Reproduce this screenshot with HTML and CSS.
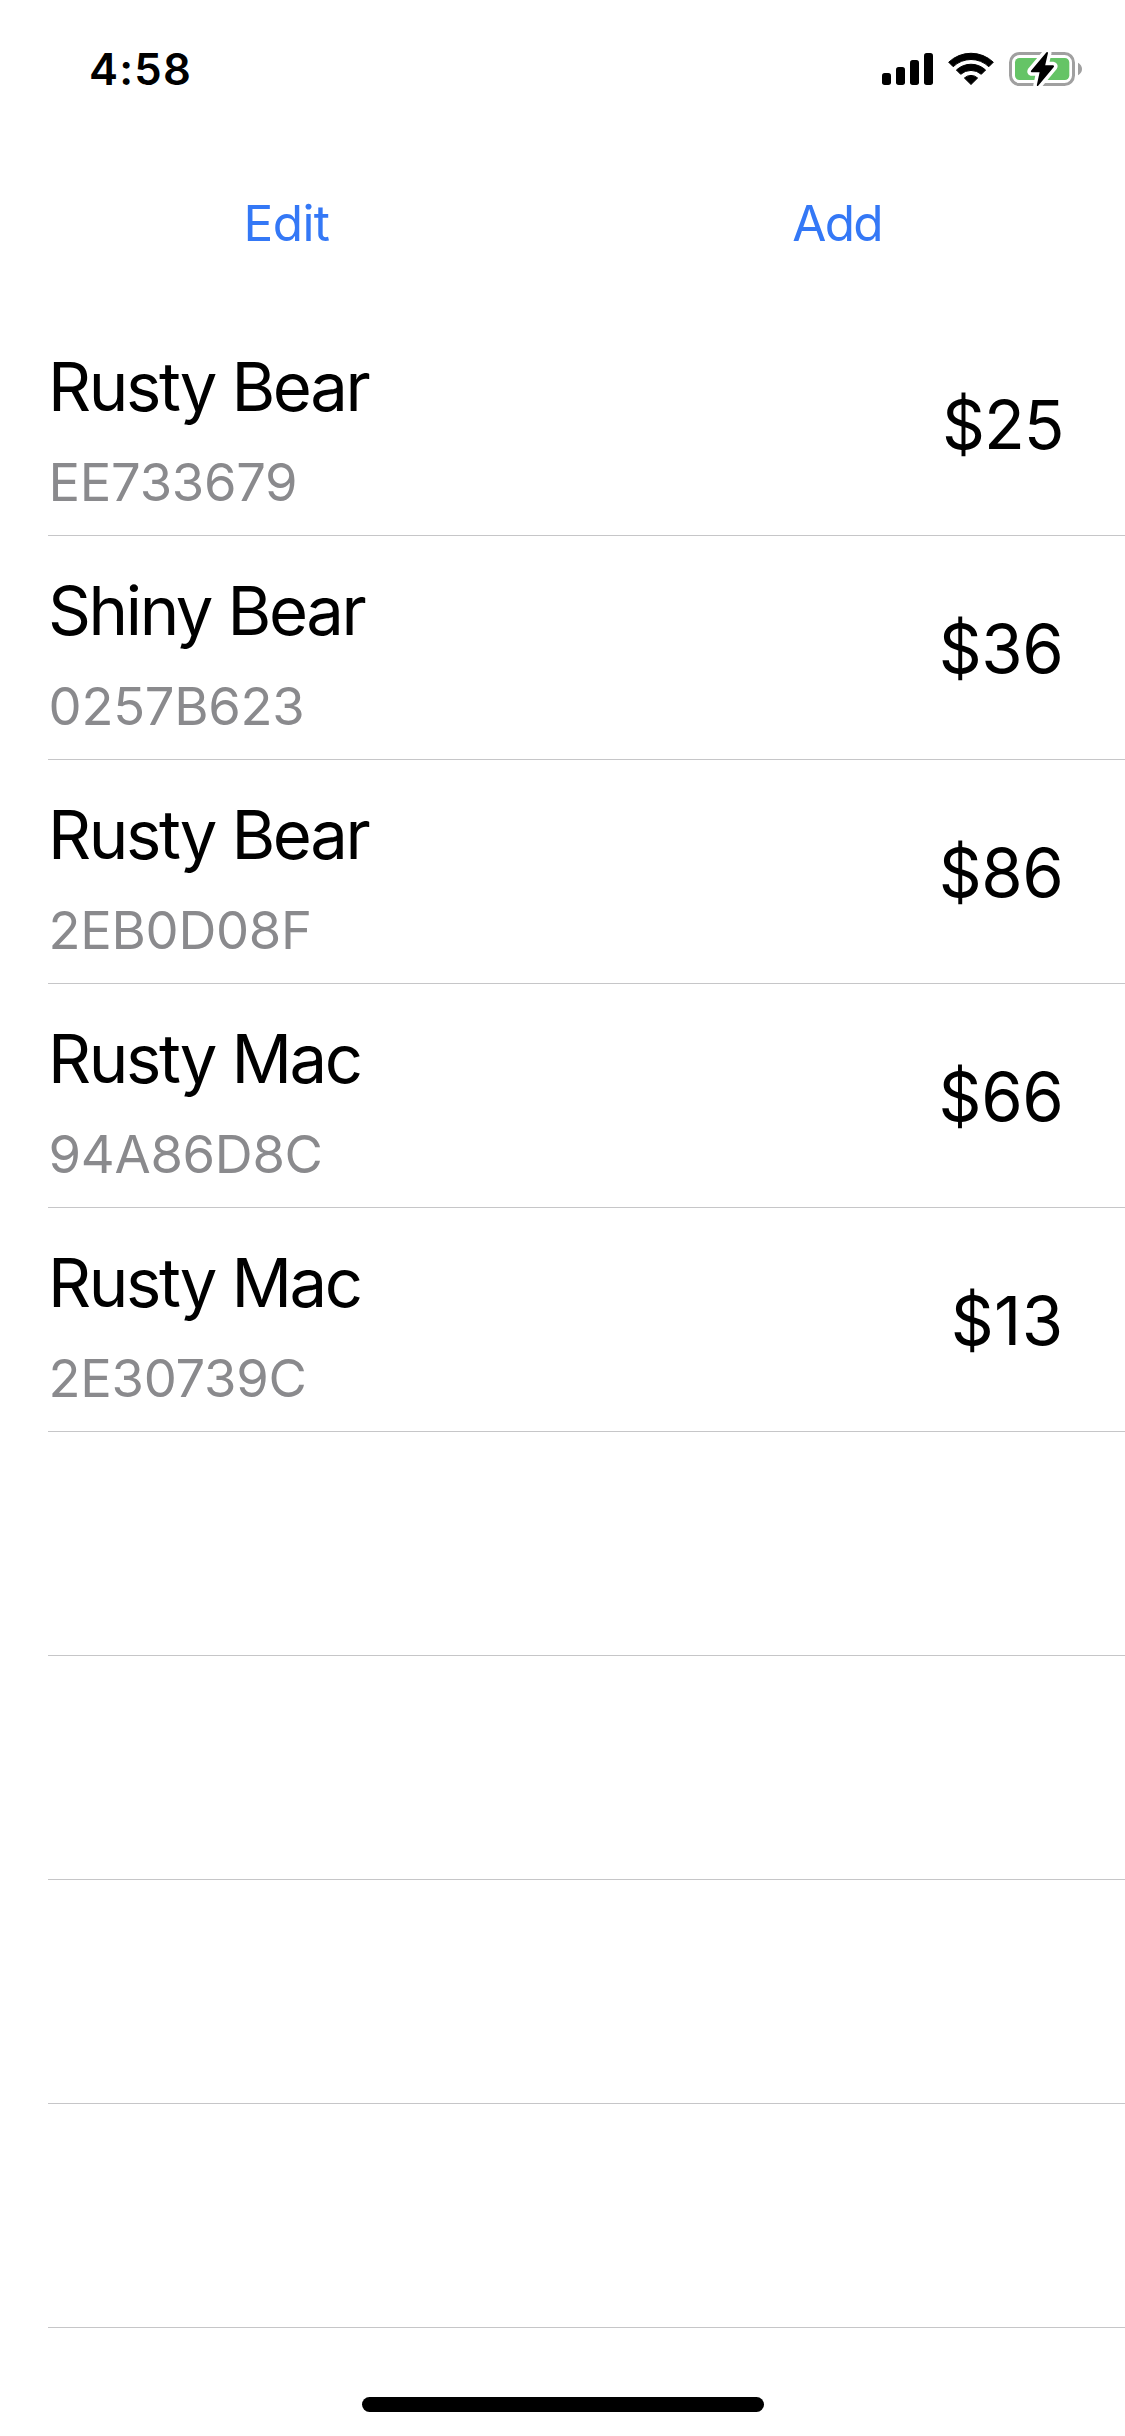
FILE: index.html
```
<!DOCTYPE html>
<html lang="en">
<head>
<meta charset="utf-8">
<title>Inventory</title>
<link rel="stylesheet" href="styles.css">
</head>
<body>
<div class="screen">
  <header class="status">
    <span class="time">4:58</span>
    <svg class="status-icons" viewBox="882 50 202 38" aria-hidden="true">
      <!-- signal -->
      <rect x="882" y="73" width="9" height="12" rx="2.7"/>
      <rect x="896" y="67" width="9" height="18" rx="2.7"/>
      <rect x="910" y="60" width="9" height="25" rx="2.7"/>
      <rect x="924" y="53" width="9" height="32" rx="2.7"/>
      <!-- wifi -->
      <g class="wifi">
        <path d="M948.7 62.2A32.3 32.3 0 0 1 993.3 62.2L988.8 66.7A25.6 25.6 0 0 0 953.2 66.7Z"/>
        <path d="M956.4 70A21.4 21.4 0 0 1 985.6 70L981.3 74.3A15.6 15.6 0 0 0 960.7 74.3Z"/>
        <path d="M964.4 78A9.7 9.7 0 0 1 977.6 78L971 84.5Z"/>
      </g>
      <!-- battery -->
      <rect class="battery-case" x="1010.5" y="53.5" width="63" height="31" rx="9"/>
      <rect class="battery-fill" x="1015" y="58" width="54.3" height="22" rx="4.5"/>
      <path class="battery-cap" d="M1078 62.7Q1082 65 1082 69T1078 75.3Z"/>
      <path class="bolt-halo" d="M1046.5 52.2L1031 70.8Q1030.4 72 1031.5 72.3H1039.6L1036.8 85.2Q1037.2 86.8 1038.4 85.6L1053.8 67Q1054.6 65.7 1053.2 65.3H1045.2L1048 53Q1047.8 51.4 1046.5 52.2Z"/>
      <path d="M1046.5 52.2L1031 70.8Q1030.4 72 1031.5 72.3H1039.6L1036.8 85.2Q1037.2 86.8 1038.4 85.6L1053.8 67Q1054.6 65.7 1053.2 65.3H1045.2L1048 53Q1047.8 51.4 1046.5 52.2Z"/>
    </svg>
  </header>
  <nav class="toolbar">
    <a class="action action-edit">Edit</a>
    <a class="action action-add">Add</a>
  </nav>
  <ul class="list">
    <li class="row"><div class="item"><span class="name">Rusty Bear</span><span class="serial">EE733679</span></div><span class="price price-tight">$25</span></li>
    <li class="row"><div class="item"><span class="name">Shiny Bear</span><span class="serial">0257B623</span></div><span class="price">$36</span></li>
    <li class="row"><div class="item"><span class="name">Rusty Bear</span><span class="serial">2EB0D08F</span></div><span class="price">$86</span></li>
    <li class="row"><div class="item"><span class="name">Rusty Mac</span><span class="serial">94A86D8C</span></div><span class="price">$66</span></li>
    <li class="row"><div class="item"><span class="name">Rusty Mac</span><span class="serial">2E30739C</span></div><span class="price price-loose">$13</span></li>
    <li class="row"></li>
    <li class="row"></li>
    <li class="row"></li>
    <li class="row"></li>
  </ul>
  <div class="home-indicator"></div>
</div>
</body>
</html>
```
FILE: styles.css
```
* { box-sizing: border-box; }
body {
  margin: 0;
  background: #fff;
  color: #000;
  font-family: Inter, "Liberation Sans", sans-serif;
}
.screen {
  width: 1125px;
  height: 2436px;
  display: flex;
  flex-direction: column;
  align-items: stretch;
}

.status {
  height: 138px;
  padding: 0 41px 0 89px;
  display: flex;
  align-items: center;
  justify-content: space-between;
}
.time {
  padding-top: 2px;
  font-size: 43.6px;
  font-weight: 560;
  line-height: 52px;
  letter-spacing: 1.2px;
}
.status-icons { width: 202px; height: 38px; }
.wifi { stroke: #000; stroke-width: 1; stroke-linejoin: round; }
.battery-case { fill: none; stroke: #a0a0a0; stroke-width: 3; }
.battery-fill { fill: #65c466; }
.battery-cap { fill: #a0a0a0; }
.bolt-halo { stroke: #fff; stroke-width: 7; stroke-linejoin: round; }

.toolbar {
  height: 174px;
  padding: 0 13.5px 4px;
  display: grid;
  grid-template-columns: 1fr 1fr;
  align-items: center;
  justify-items: center;
}
.action {
  color: #3478f6;
  font-size: 49.5px;
  line-height: 60px;
}
.action-edit { padding-right: 3px; letter-spacing: -.6px; }
.action-add { letter-spacing: -1.8px; }

.list {
  margin: 0;
  padding: 0 0 0 48px;
  list-style: none;
}
.row {
  height: 224px;
  border-bottom: 1px solid #c6c6c8;
  padding-right: 61.5px;
  display: flex;
  align-items: center;
  justify-content: space-between;
}
.item {
  display: flex;
  flex-direction: column;
  gap: 22px;
  padding-top: 13px;
}
.name {
  font-size: 67px;
  line-height: 82px;
  letter-spacing: -2.4px;
}
.serial {
  padding-left: .6px;
  color: #8a8a8d;
  font-size: 52.5px;
  line-height: 64px;
  letter-spacing: -.3px;
}
.price {
  font-size: 67px;
  line-height: 80px;
  padding-top: 2px;
  letter-spacing: -.4px;
}
.price-tight { letter-spacing: -1px; }
.price-loose { letter-spacing: .4px; }

.home-indicator {
  width: 402px;
  height: 15px;
  margin: 69px auto 0 362px;
  border-radius: 7.5px;
  background: #000;
}
```
